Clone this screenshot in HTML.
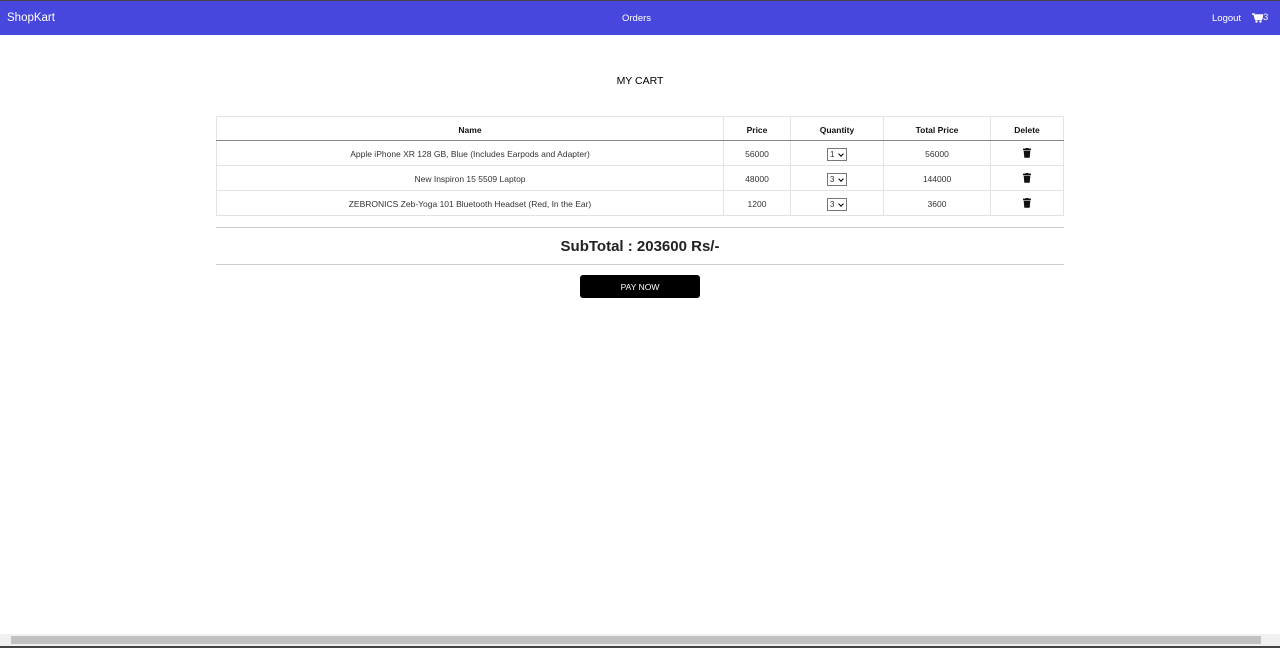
<!DOCTYPE html>
<html><head><meta charset="utf-8"><style>
*{box-sizing:border-box;margin:0;padding:0}
html,body{width:1280px;height:648px;overflow:hidden;background:#fff;font-family:"Liberation Sans",sans-serif;color:#212529}
.top{position:absolute;left:0;top:0;width:1280px;height:1px;background:#444}
nav{position:absolute;left:0;top:1px;width:1280px;height:34px;background:#4747dd;color:#fff}
nav .brand{position:absolute;left:7px;top:11px;font-size:11.5px}
nav .ord{position:absolute;left:622px;top:12px;font-size:9.5px}
nav .lo{position:absolute;left:1212px;top:12px;font-size:9.5px}
nav .cart{position:absolute;left:1252px;top:11px;font-size:9.5px;display:flex;align-items:center}
h1{position:absolute;top:75px;width:1280px;text-align:center;font-size:10.5px;font-weight:normal;color:#000}
table{position:absolute;left:216px;top:116px;width:848px;border-collapse:collapse;font-size:8.5px}
th,td{border:1px solid #e3e3e3;text-align:center;height:25px;color:#333;padding-top:2px}
th{font-weight:bold;color:#111;height:24px;border-bottom:1px solid #888}
.sel{display:inline-block;width:20px;height:13px;border:1px solid #777;font-size:8px;line-height:11px;text-align:left;padding-left:2px;position:relative;vertical-align:middle}
.sel:after{content:"";position:absolute;right:3px;top:3px;width:3px;height:3px;border-right:1.3px solid #000;border-bottom:1.3px solid #000;transform:rotate(45deg)}
.hr1{position:absolute;left:216px;top:227px;width:848px;height:1px;background:#ccc}
.hr2{position:absolute;left:216px;top:264px;width:848px;height:1px;background:#ccc}
.sub{position:absolute;top:238px;width:1280px;text-align:center;font-size:15px;font-weight:bold;color:#222}
.btn{position:absolute;left:580px;top:275px;width:120px;height:23px;background:#000;color:#fff;border-radius:3px;font-size:8.5px;text-align:center;line-height:24px}
.sb{position:absolute;left:0;top:634px;width:1280px;height:12px;background:#f0f0f0}
.sb .th{position:absolute;left:11px;top:2px;width:1250px;height:8px;background:#c1c1c1}
.bot{position:absolute;left:0;top:646px;width:1280px;height:2px;background:#444}
</style></head><body>
<div class="top"></div>
<nav><span class="brand">ShopKart</span><span class="ord">Orders</span><span class="lo">Logout</span>
<span class="cart"><svg width="11" height="10" viewBox="0 0 11 10"><path d="M0 1h2l1.5 5.5h6L11 2H3" fill="none" stroke="#fff" stroke-width="1.4"/><rect x="3" y="2" width="7" height="4" fill="#fff"/><circle cx="4.5" cy="8.6" r="1.1" fill="#fff"/><circle cx="8.5" cy="8.6" r="1.1" fill="#fff"/></svg>3</span></nav>
<h1>MY CART</h1>
<table>
<tr><th style="width:507px">Name</th><th style="width:67px">Price</th><th style="width:93px">Quantity</th><th style="width:107px">Total Price</th><th>Delete</th></tr>
<tr><td>Apple iPhone XR 128 GB, Blue (Includes Earpods and Adapter)</td><td>56000</td><td><span class="sel">1</span></td><td>56000</td><td><svg width="8" height="10" viewBox="0 0 8 10"><rect x="0" y="0.6" width="8" height="1.6" fill="#111"/><rect x="2.5" y="0" width="3" height="1" fill="#111"/><path d="M0.7 2.8h6.6l-0.6 7H1.3z" fill="#111"/></svg></td></tr>
<tr><td>New Inspiron 15 5509 Laptop</td><td>48000</td><td><span class="sel">3</span></td><td>144000</td><td><svg width="8" height="10" viewBox="0 0 8 10"><rect x="0" y="0.6" width="8" height="1.6" fill="#111"/><rect x="2.5" y="0" width="3" height="1" fill="#111"/><path d="M0.7 2.8h6.6l-0.6 7H1.3z" fill="#111"/></svg></td></tr>
<tr><td>ZEBRONICS Zeb-Yoga 101 Bluetooth Headset (Red, In the Ear)</td><td>1200</td><td><span class="sel">3</span></td><td>3600</td><td><svg width="8" height="10" viewBox="0 0 8 10"><rect x="0" y="0.6" width="8" height="1.6" fill="#111"/><rect x="2.5" y="0" width="3" height="1" fill="#111"/><path d="M0.7 2.8h6.6l-0.6 7H1.3z" fill="#111"/></svg></td></tr>
</table>
<div class="hr1"></div>
<div class="sub">SubTotal : 203600 Rs/-</div>
<div class="hr2"></div>
<div class="btn">PAY NOW</div>
<div class="sb"><div class="th"></div></div>
<div class="bot"></div>
</body></html>
